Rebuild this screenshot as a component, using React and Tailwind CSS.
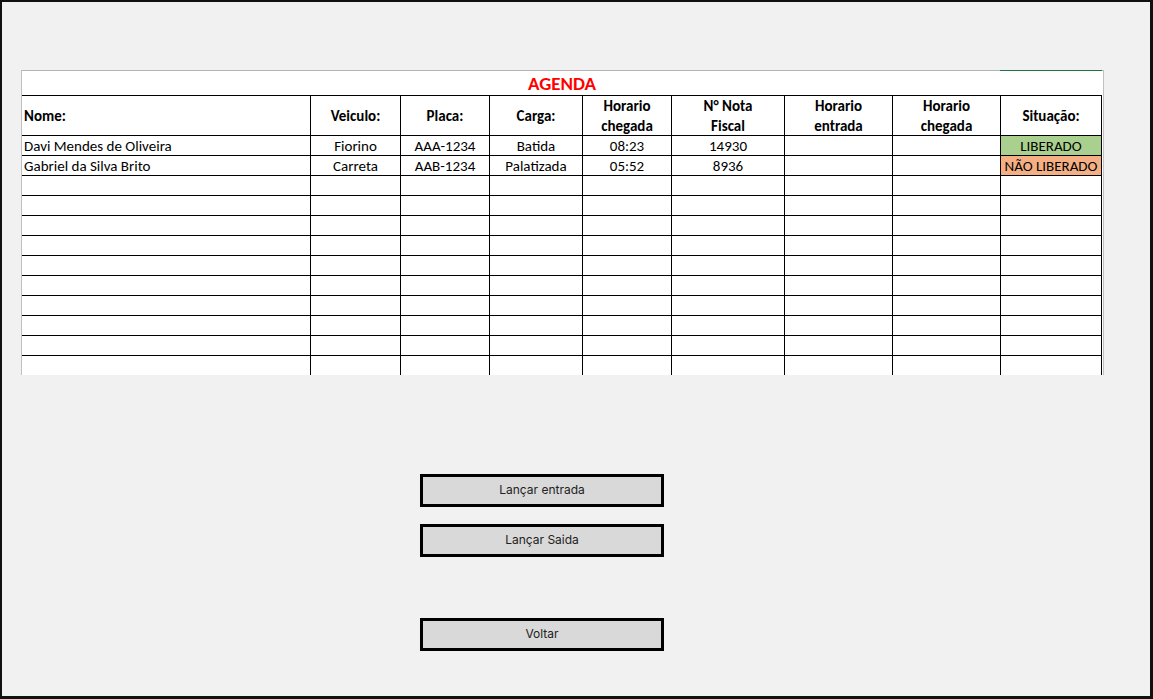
import React from "react";

const W = ["w-[289px]", "w-[90px]", "w-[89px]", "w-[93px]", "w-[89px]", "w-[113px]", "w-[108px]", "w-[108px]", "w-[101px]"];

const data = [
  ["Davi Mendes de Oliveira", "Fiorino", "AAA-1234", "Batida", "08:23", "14930", "", "", "LIBERADO"],
  ["Gabriel da Silva Brito", "Carreta", "AAB-1234", "Palatizada", "05:52", "8936", "", "", "NÃO LIBERADO"],
];

function Cell({ i, children, extra = "" }) {
  return (
    <div
      className={`${W[i]} shrink-0 h-full border-r border-black flex items-center ${
        i === 0 ? "justify-start pl-[2px]" : "justify-center"
      } ${extra} whitespace-nowrap overflow-hidden`}
    >
      {children}
    </div>
  );
}

function Btn({ children }) {
  return (
    <button className="w-[244px] h-[33px] border-[3px] border-black bg-[#d9d9d9] text-[12px] text-[#222] flex items-center justify-center pb-px" style={{ fontFamily: "Inter, 'Liberation Sans', sans-serif" }}>
      {children}
    </button>
  );
}

export default function App() {
  const headers = ["Nome:", "Veiculo:", "Placa:", "Carga:", "Horario\nchegada", "N° Nota\nFiscal", "Horario\nentrada", "Horario\nchegada", "Situação:"];
  return (
    <div className="w-[1153px] h-[699px] bg-[#f1f1f1] border-l-2 border-t-2 border-r-[3px] border-b-[3px] border-[#111] overflow-hidden pt-[68px] pl-[19px]">
      <div
        className="w-[1083px] h-[305px] overflow-hidden bg-white border-l border-r border-[#c0c0c0] text-[15px] text-black"
        style={{ fontFamily: "Carlito, Lato, 'Liberation Sans', sans-serif" }}
      >
        <div className="flex h-px w-[1082px]">
          <div className="w-[978px] bg-[#b4b4b4]" />
          <div className="w-[102px] bg-[#217346]" />
          <div className="w-[2px] bg-[#b4b4b4]" />
        </div>
        <div className="w-[1080px] h-[25px] border-b border-black flex items-center justify-center">
          <span className="text-[19px] font-bold text-[#ff0000] leading-none">AGENDA</span>
        </div>
        <div className="w-[1080px] h-[40px] border-b border-black flex font-bold text-[15px] leading-[20px]">
          {headers.map((h, i) => (
            <Cell i={i} key={i} extra="text-center pt-px">
              <span className="whitespace-pre">{h}</span>
            </Cell>
          ))}
        </div>
        {data.map((r, ri) => (
          <div key={ri} className="w-[1080px] h-[20px] border-b border-black flex leading-none">
            {r.map((c, i) => (
              <Cell
                i={i}
                key={i}
                extra={
                  "pt-[2px] " + (i === 8 ? (ri === 0 ? "bg-[#a9d08e]" : "bg-[#f4b084]") : "")
                }
              >
                {c}
              </Cell>
            ))}
          </div>
        ))}
        {Array.from({ length: 10 }).map((_, ri) => (
          <div key={ri} className="w-[1080px] h-[20px] border-b border-black flex">
            {W.map((_, i) => (
              <Cell i={i} key={i} />
            ))}
          </div>
        ))}
      </div>
      <div className="flex flex-col ml-[399px] mt-[99px]">
        <Btn>Lançar entrada</Btn>
        <div className="h-[17px]" />
        <Btn>Lançar Saida</Btn>
        <div className="h-[61px]" />
        <Btn>Voltar</Btn>
      </div>
    </div>
  );
}
